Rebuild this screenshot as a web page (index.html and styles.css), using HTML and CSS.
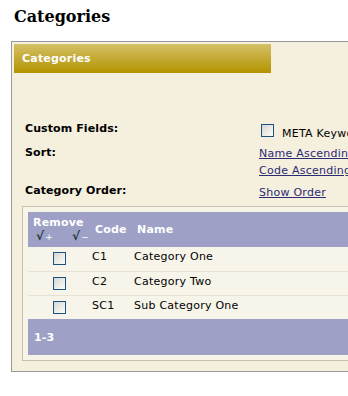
FILE: index.html
```html
<!DOCTYPE html>
<html lang="en">
  <head>
    <meta charset="UTF-8" />
    <title>Categories</title>
    <link rel="stylesheet" href="styles.css">
  </head>
  <body>
    <h1 class="page-title">Categories</h1>

    <div class="panel">
      <div class="panel-head">Categories</div>

      <div class="form">
        <div class="form-row first">
          <div class="label">Custom Fields:</div>
          <div class="value">
            <span class="checkbox"></span>
            <span class="check-text">META Keywords</span>
          </div>
        </div>
        <div class="form-row sort">
          <div class="label">Sort:</div>
          <div class="value links">
            <a href="#">Name Ascending</a>
            <a href="#">Code Ascending</a>
          </div>
        </div>
        <div class="form-row order">
          <div class="label">Category Order:</div>
          <div class="value shifted">
            <a href="#">Show Order</a>
          </div>
        </div>
      </div>

      <div class="list-box">
        <table class="list">
          <thead>
            <tr>
              <th class="col-remove">
                <div>Remove</div>
                <div class="ticks">
                  <span class="tick">&radic;</span><span class="sign">+</span>
                  <span class="tick gap">&radic;</span><span class="sign">&minus;</span>
                </div>
              </th>
              <th class="col-code">Code</th>
              <th>Name</th>
            </tr>
          </thead>
          <tbody>
            <tr>
              <td class="cell-check"><span class="checkbox"></span></td>
              <td>C1</td>
              <td>Category One</td>
            </tr>
            <tr>
              <td class="cell-check"><span class="checkbox"></span></td>
              <td>C2</td>
              <td>Category Two</td>
            </tr>
            <tr>
              <td class="cell-check"><span class="checkbox"></span></td>
              <td>SC1</td>
              <td>Sub Category One</td>
            </tr>
          </tbody>
          <tfoot>
            <tr>
              <td colspan="3">1-3</td>
            </tr>
          </tfoot>
        </table>
      </div>
    </div>
  </body>
</html>
```

FILE: styles.css
```css
body {
  margin: 0;
  padding: 0 0 0 11px;
  overflow: hidden;
  background: #fff;
  font-family: "DejaVu Sans", Verdana, sans-serif;
  font-size: 11px;
  color: #000;
}
.page-title {
  font-family: "DejaVu Serif", Georgia, serif;
  font-size: 16px;
  line-height: 19px;
  margin: 7px 0 15px 3px;
}
.panel {
  width: 420px;
  background: #f5efde;
  border: 1px solid #999;
  border-right: none;
  padding: 0 0 10px 0;
}
.panel-head {
  width: 249px;
  height: 29px;
  margin: 2px 0 0 2px;
  padding-left: 8px;
  line-height: 29px;
  background: linear-gradient(#d4c066, #b39300);
  color: #fff;
  font-weight: bold;
  letter-spacing: 0.2px;
}
.form {
  padding: 49px 0 0 13px;
}
.form-row {
  display: flex;
  line-height: 13px;
}
.form-row.sort {
  margin-top: 6px;
}
.form-row.order {
  margin-top: 4px;
}
.label {
  width: 234px;
  font-weight: bold;
  letter-spacing: 0.1px;
}
.value {
  display: flex;
  align-items: flex-start;
}
.value.shifted {
  padding-top: 2px;
}
.links {
  flex-direction: column;
}
.links a {
  padding-top: 1px;
  margin-bottom: 3px;
}
a {
  color: #2b2b73;
  text-decoration: underline;
  white-space: nowrap;
  letter-spacing: 0.25px;
}
.first .checkbox {
  margin: 2px 0 0 2px;
}
.check-text {
  padding: 5px 0 0 8px;
  white-space: nowrap;
  letter-spacing: 0.25px;
}
.checkbox {
  display: inline-block;
  width: 11px;
  height: 11px;
  border: 1px solid #1c5180;
  background: linear-gradient(135deg, #d8d8d2, #fbfbf8);
}
.list-box {
  margin: 7px 0 0 10px;
  width: 400px;
  border: 1px solid #c4c1b3;
  background: #f7f4e8;
  padding: 5px;
}
.list {
  width: 100%;
  border-collapse: collapse;
}
.list thead th {
  height: 35px;
  padding: 0 0 0 4px;
  background: #9ea0c6;
  color: #fff;
  font-weight: bold;
  text-align: left;
  vertical-align: middle;
  line-height: 12px;
  letter-spacing: 0.2px;
}
.list th.col-remove {
  width: 58px;
  padding-left: 5px;
}
.list th.col-code {
  width: 38px;
}
.ticks {
  line-height: 11px;
  margin-top: 2px;
  white-space: nowrap;
}
.tick {
  color: #1b3535;
  font-size: 12px;
  padding-left: 3px;
}
.tick.gap {
  padding-left: 15px;
}
.sign {
  font-size: 9px;
  font-weight: normal;
  padding-left: 1px;
}
.list tbody tr {
  height: 24px;
}
.list tbody td {
  box-sizing: border-box;
  height: 24px;
  padding: 3px 1px 0;
  background: #f7f5ea;
  border-bottom: 1px solid #e6e2d2;
  vertical-align: top;
  line-height: 13px;
  white-space: nowrap;
  letter-spacing: 0.25px;
}
.list tbody td.cell-check {
  padding: 5px 0 0;
}
.cell-check .checkbox {
  display: block;
  margin: 0 auto;
}
.list tbody tr:last-child td {
  border-bottom: none;
}
.list tfoot td {
  height: 36px;
  padding: 0 0 0 6px;
  background: #9ea0c6;
  color: #fff;
  font-weight: bold;
  letter-spacing: 0.2px;
}
```
